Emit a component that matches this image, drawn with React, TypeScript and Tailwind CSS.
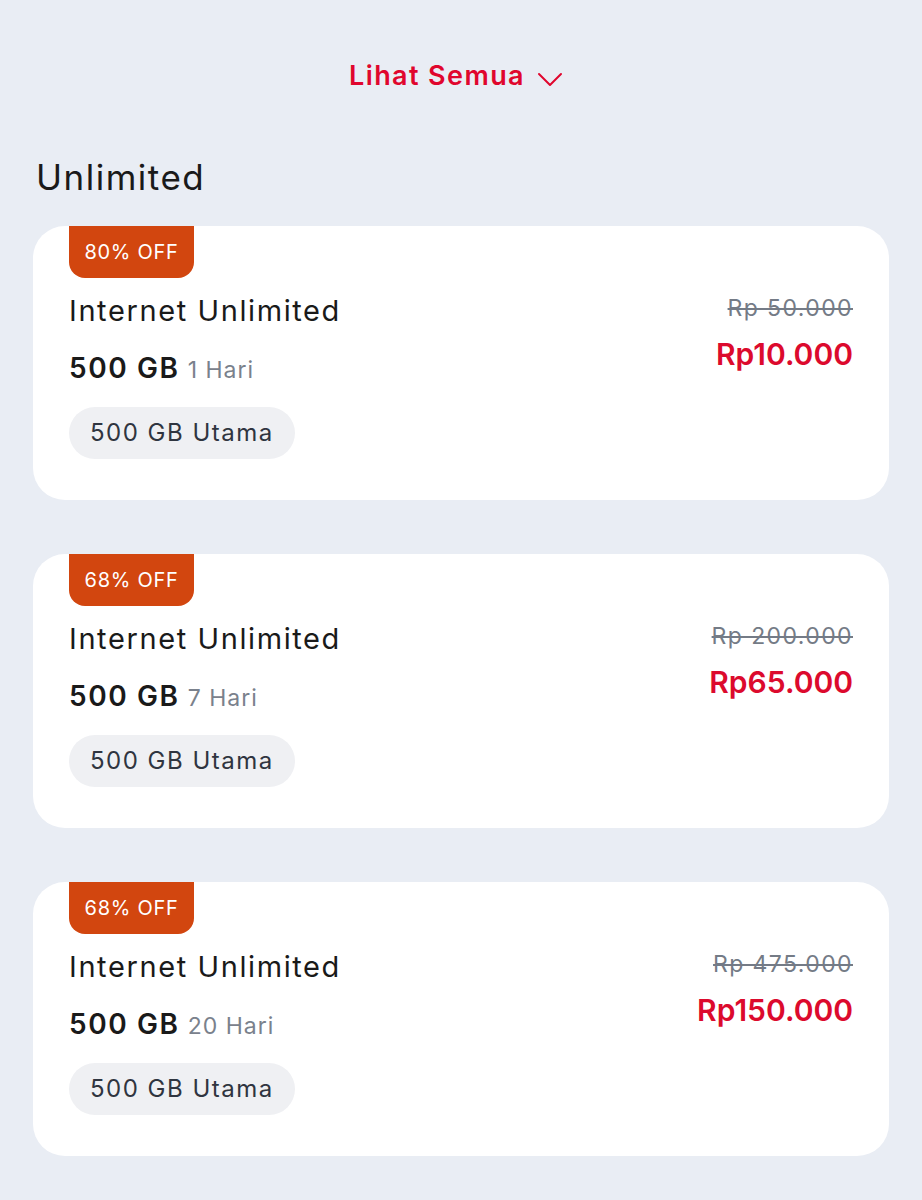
import React from "react";

type Plan = {
  discount: string;
  title: string;
  quota: string;
  days: string;
  tag: string;
  oldPrice: string;
  price: string;
};

const plans: Plan[] = [
  { discount: "80% OFF", title: "Internet Unlimited", quota: "500 GB", days: "1 Hari", tag: "500 GB Utama", oldPrice: "Rp 50.000", price: "Rp10.000" },
  { discount: "68% OFF", title: "Internet Unlimited", quota: "500 GB", days: "7 Hari", tag: "500 GB Utama", oldPrice: "Rp 200.000", price: "Rp65.000" },
  { discount: "68% OFF", title: "Internet Unlimited", quota: "500 GB", days: "20 Hari", tag: "500 GB Utama", oldPrice: "Rp 475.000", price: "Rp150.000" },
];

const PlanCard = ({ plan }: { plan: Plan }) => (
  <div className="flex h-[274px] justify-between rounded-[32px] bg-white px-9">
    {/* left: badge + details */}
    <div className="flex flex-col items-start">
      <div className="flex h-[52px] w-[125px] items-center justify-center rounded-b-[16px] bg-[#d2460f] text-[20px] tracking-[0.7px] text-white">
        {plan.discount}
      </div>
      <div className="mt-[13px] text-[29px] leading-[40px] tracking-[1.6px] text-[#1a1a1a]">{plan.title}</div>
      <div className="mt-[17px] flex items-baseline gap-2 leading-[40px]">
        <span className="text-[28px] font-semibold tracking-[1.6px] text-[#1a1a1a]">{plan.quota}</span>
        <span className="text-[23px] tracking-[1px] text-[#7a818c]">{plan.days}</span>
      </div>
      <div className="mt-[17px] flex h-[52px] items-center rounded-full bg-[#eff0f3] px-[21px] text-[24px] tracking-[1.5px] text-[#2f3540]">
        {plan.tag}
      </div>
    </div>
    {/* right: prices */}
    <div className="flex flex-col items-end pt-[66px]">
      <div className="text-[23px] leading-[32px] tracking-[1.4px] text-[#747b86] line-through decoration-[#747b86]">{plan.oldPrice}</div>
      <div className="mt-[10px] text-[30px] font-semibold leading-[40px] text-[#dc0a2d]">{plan.price}</div>
    </div>
  </div>
);

export default function App() {
  return (
    <div
      className="min-h-[1200px] w-full bg-[#e9edf4] px-[33px] pt-[56px]"
      style={{ fontFamily: "Inter, 'Noto Sans', sans-serif" }}
    >
      <div className="flex items-center justify-center gap-3 pr-[10px]">
        <span className="text-[27px] font-semibold leading-[40px] tracking-[1.4px] text-[#e0062d]">Lihat Semua</span>
        <svg width="26" height="16" viewBox="0 0 26 16" fill="none" className="mt-[6px]">
          <path d="M2 3l11 11L24 3" stroke="#e0062d" strokeWidth="2" strokeLinecap="round" strokeLinejoin="round" />
        </svg>
      </div>
      <h2 className="mt-[60px] pl-[3px] text-[35px] leading-[42px] tracking-[1.5px] text-[#1a1a1a]">Unlimited</h2>
      <div className="mt-[28px] flex flex-col gap-[54px]">
        {plans.map((p, i) => (
          <PlanCard key={i} plan={p} />
        ))}
      </div>
    </div>
  );
}
